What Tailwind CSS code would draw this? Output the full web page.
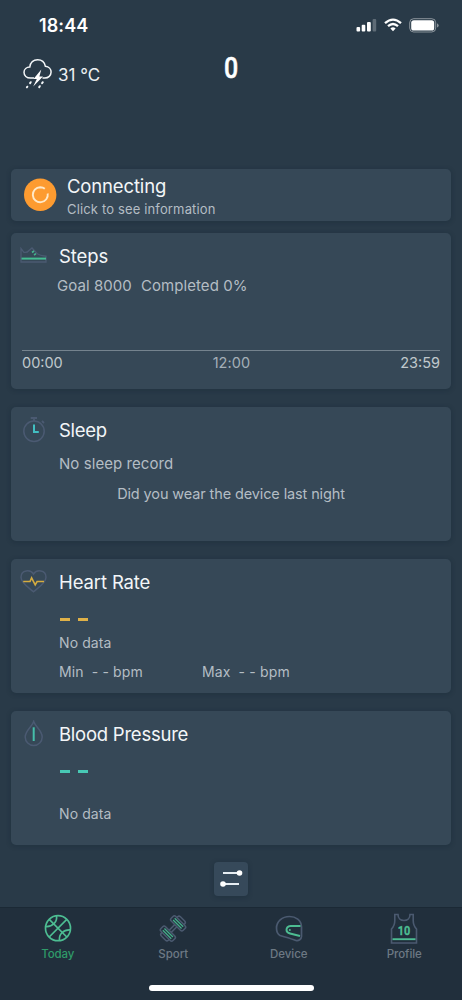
<!DOCTYPE html>
<html lang="en">
<head>
<meta charset="utf-8">
<title>Today</title>
<script src="https://cdn.jsdelivr.net/npm/@tailwindcss/browser@4"></script>
</head>
<body class="bg-white">
<div class="w-[462px] h-[1000px] overflow-hidden bg-[#293a48] font-['Inter','Liberation_Sans',sans-serif] flex flex-col whitespace-nowrap">
  <header class="h-[169px] shrink-0">
    <div class="h-[50px] pl-[39px] pr-[23px] pt-[14px] flex items-start justify-between">
      <div class="text-[18px] leading-[24px] font-semibold text-white tracking-[0.1px]">18:44</div>
      <div class="flex items-center h-[22px] gap-[7px]">
        <svg width="21" height="14" viewBox="0 0 21 14"><g fill="#fff"><rect x="0.5" y="9" width="3.6" height="4.500" rx="1"/><rect x="5.700" y="6.800" width="3.600" height="6.700" rx="1"/><rect x="11" y="4" width="3.800" height="9.500" rx="1"/><rect x="16.600" y="1" width="3.600" height="12.500" rx="1" opacity=".25"/></g></svg>
        <svg width="18" height="14" viewBox="0 0 18 14" fill="none" stroke="#fff" stroke-width="2.3"><path d="M1 5.200Q9-2 17 5.200"/><path d="M4 8.200Q9 3.800 14 8.200"/><path d="M6.400 10.400Q9 8.200 11.600 10.400L9 13.200Z" fill="#fff" stroke="none"/></svg>
        <svg width="30" height="15" viewBox="0 0 30 15"><rect x=".7" y=".7" width="26" height="13.300" rx="4" fill="none" stroke="#fff" stroke-opacity=".45"/><rect x="2.200" y="2.200" width="23" height="10.300" rx="2.600" fill="#fff"/><path d="M28 5.200q1.700.7 1.700 2.200T28 9.600z" fill="#fff" opacity=".45"/></svg>
      </div>
    </div>
    <div class="grid grid-cols-[206px_50px_206px] h-[60px]">
      <div class="flex items-start pl-[23px] pt-[8px]">
        <svg width="30" height="32" viewBox="0 0 30 32" fill="none" stroke="#f4f7f9" stroke-width="1.500"><path d="M11 20H7.600C3.600 20 1 17.500 1 14.300S3.700 9 6.800 9C7.300 4.500 10.500 1.700 14.600 1.700s7 2.600 7.800 6.600c3.500.3 5.700 2.800 5.700 5.800 0 3.500-2.800 5.900-6.200 5.900h-2.400"/><path d="M18.300 11.500L10.500 21h3.300l-3.600 7.500L20 18.600h-3.600z" fill="#fff" stroke="none"/><g stroke-width="2" stroke-linecap="round"><path d="M7.700 24.200l-.6.9M4.300 28.700l-.4.6M19.800 24.200l-.7.9M16.800 28.200l-.6.9"/></g></svg>
        <div class="ml-[5px] mt-[5px] text-[17px] leading-[24px] text-[#eef1f3]">31 °C</div>
      </div>
      <div class="text-center pt-[3px] text-[29px] leading-[30px] font-medium text-white font-['Roboto'] scale-x-[0.86] [-webkit-text-stroke:0.5px_white]">0</div>
    </div>
  </header>

  <main class="h-[738px] shrink-0 px-[11px] flex flex-col">
    <section class="h-[52px] shrink-0 rounded-[5px] bg-[#364857] shadow-[0_1px_4px_1px_rgba(15,30,45,0.22)] flex pl-[13px] pt-[9px]">
      <svg class="block" width="33" height="33" viewBox="0 0 33 33"><circle cx="16.200" cy="16.700" r="16.200" fill="#fd9b30"/><path d="M20.200 10.200A7.600 7.600 0 1 1 13.500 9.500" transform="translate(-.3 .2)" fill="none" stroke="#ffe3b8" stroke-width="0"/><path d="M22.300 11.600A7.500 7.500 0 1 1 16.200 9.200" fill="none" stroke="#ffe3b8" stroke-width="0"/><path d="M16.200 9.200A7.500 7.500 0 1 0 23.700 15.500M16.200 9.200Q19 9.200 20.800 10.800" fill="none" stroke="#ffe9c8" stroke-width="1.900"/></svg>
      <div class="ml-[10px] -mt-[4px]">
        <div class="text-[18.500px] leading-[24px] text-[#f3f6f8] tracking-[-0.15px]">Connecting</div>
        <div class="text-[13px] leading-[20px] text-[#b4bdc4] mt-px tracking-[0.15px]">Click to see information</div>
      </div>
    </section>

    <section class="mt-[12px] h-[156px] shrink-0 rounded-[5px] bg-[#364857] shadow-[0_1px_4px_1px_rgba(15,30,45,0.22)] flex flex-col px-[11px] pt-[11px]">
      <div class="flex h-[24px]">
        <svg class="-ml-[2px] mt-[3px]" width="28" height="17" viewBox="0 0 28 17" fill="none"><path d="M1 15V1.500l3 3.800q3 .7 5-1.800l3-2.500 5 5.500q3 2.200 9 2.700V15z" stroke="#4b5a72" stroke-width="1.300"/><path d="M12 5.500l2-1.500M14 8l2-1.400" stroke="#45b38d" stroke-width="1.600"/><path d="M1.500 11.600H26" stroke="#45bd91" stroke-width="2"/></svg>
        <h2 class="ml-[11px] text-[18.5px] leading-[24px] text-[#f3f6f8] tracking-[-0.1px]">Steps</h2>
      </div>
      <div class="pl-[35px] mt-[8px] flex gap-[9px] text-[15px] leading-[20px] text-[#b4bdc4] tracking-[0.07px]"><span>Goal 8000</span><span>Completed 0%</span></div>
      <div class="mt-[54px] h-px w-[418px] bg-[#75838e]"></div>
      <div class="w-[418px] pt-[2px] flex justify-between text-[14.5px] leading-[20px] text-[#c0c8cd]"><span>00:00</span><span class="text-[#a4afb7] tracking-[0.1px]">12:00</span><span>23:59</span></div>
    </section>

    <section class="mt-[18px] h-[134px] shrink-0 rounded-[5px] bg-[#364857] shadow-[0_1px_4px_1px_rgba(15,30,45,0.22)] px-[11px] pt-[9px]">
      <div class="flex h-[28px]">
        <svg width="24" height="28" viewBox="0 0 24 28" fill="none"><circle cx="12" cy="15.200" r="10.200" stroke="#4b5a72" stroke-width="1.500"/><path d="M8.700 2H15M12 2v3M20 5l2 2" stroke="#4b5a72" stroke-width="1.800"/><path d="M12 8.500V16h4.800" stroke="#42bfc2" stroke-width="2"/></svg>
        <h2 class="ml-[13px] mt-[2px] text-[18.5px] leading-[24px] text-[#f3f6f8] tracking-[-0.3px]">Sleep</h2>
      </div>
      <div class="pl-[37px] mt-[10px] text-[15px] leading-[20px] text-[#b4bdc4] tracking-[0.07px]">No sleep record</div>
      <div class="text-center mt-[10px] text-[14.5px] leading-[20px] text-[#b4bdc4] tracking-[-0.12px]">Did you wear the device last night</div>
    </section>

    <section class="mt-[18px] h-[134px] shrink-0 rounded-[5px] bg-[#364857] shadow-[0_1px_4px_1px_rgba(15,30,45,0.22)] px-[9px] pt-[11px]">
      <div class="flex h-[24px]">
        <svg width="28" height="24" viewBox="0 0 28 24" fill="none"><path d="M13.500 4C10.700-.6 1-.5 1 7.200c0 6 8.500 11 12.500 14.500C17.500 18.200 26 13.200 26 7.200 26-.5 16.300-.6 13.500 4z" stroke="#4b5a72" stroke-width="1.500"/><path d="M3.200 11.500H10l1.600-3.600 3.600 7 1.900-3.400H24" stroke="#d5ac40" stroke-width="1.600"/></svg>
        <h2 class="ml-[11px] text-[18.5px] leading-[24px] text-[#f3f6f8] tracking-[-0.12px]">Heart Rate</h2>
      </div>
      <div class="ml-[40px] mt-[24px] flex gap-[8px]"><i class="block w-[10px] h-[3px] bg-[#dfb148]"></i><i class="block w-[10px] h-[3px] bg-[#dfb148]"></i></div>
      <div class="pl-[39px] mt-[12px] text-[14px] leading-[20px] text-[#b4bdc4] tracking-[0.1px]">No data</div>
      <div class="pl-[39px] mt-[9px] flex text-[14px] leading-[20px] text-[#b4bdc4] tracking-[0.15px]"><div class="w-[143px] flex gap-[8px]"><span>Min</span><span>- - bpm</span></div><div class="flex gap-[8px]"><span>Max</span><span>- - bpm</span></div></div>
    </section>

    <section class="mt-[18px] h-[134px] shrink-0 rounded-[5px] bg-[#364857] shadow-[0_1px_4px_1px_rgba(15,30,45,0.22)] px-[13px] pt-[9px]">
      <div class="flex h-[28px]">
        <svg width="20" height="28" viewBox="0 0 20 28" fill="none"><path d="M9.700 1.500C8.300 6.500 1.200 10.500 1.200 17a8.500 8.500 0 0 0 17 0c0-6.500-7.100-10.500-8.500-15.500z" stroke="#4b5a72" stroke-width="1.500"/><path d="M9.700 7.300V21" stroke="#45bfaa" stroke-width="2"/></svg>
        <h2 class="ml-[15px] mt-[2px] text-[18.5px] leading-[24px] text-[#f3f6f8] tracking-[-0.24px]">Blood Pressure</h2>
      </div>
      <div class="ml-[36px] mt-[22px] flex gap-[8px]"><i class="block w-[10px] h-[3px] bg-[#48c9b5]"></i><i class="block w-[10px] h-[3px] bg-[#48c9b5]"></i></div>
      <div class="pl-[35px] mt-[31px] text-[14px] leading-[20px] text-[#b4bdc4] tracking-[0.1px]">No data</div>
    </section>

    <div class="mt-[17px] self-center w-[34px] h-[34px] shrink-0 rounded-[4px] bg-[#36495a] shadow-[0_1px_4px_1px_rgba(15,30,45,0.22)]">
      <svg width="34" height="34" viewBox="0 0 34 34"><path d="M9 11h16M9 22h16" stroke="#e6edf2" stroke-width="1.900"/><g fill="#fff"><circle cx="25.500" cy="11" r="2.800"/><circle cx="9" cy="22" r="2.800"/></g></svg>
    </div>
  </main>

  <nav class="h-[93px] shrink-0 bg-[#212f3c] border-t border-[#1b2935]">
    <div class="grid grid-cols-4 h-[77px] text-[11.5px] leading-[14px] font-medium text-[#6d7984]">
      <div class="flex flex-col items-center pt-[5px] text-[#2f9b69]">
        <svg width="30" height="32" viewBox="0 0 30 32" fill="none" stroke="#4dbd92" stroke-width="1.700"><circle cx="15" cy="15.200" r="12.500"/><path d="M6.200 6.400L23.800 24M23.800 6.400L6.200 24M13.500 2.800C14.500 9 9.500 14 2.700 13.500M16.500 27.600C15.500 21.400 20.500 16.400 27.300 16.900"/></svg>
        <span class="mt-[2px] tracking-[-0.1px]">Today</span>
      </div>
      <div class="flex flex-col items-center pt-[5px]">
        <svg width="30" height="32" viewBox="0 0 30 32" fill="none"><g transform="translate(15 15.500) rotate(-45)" stroke="#4b5a70" stroke-width="1.500"><path d="M-4-1.500H4M-4 1.500H4"/><rect x="-10.500" y="-8.500" width="6.500" height="17" rx="2"/><rect x="4" y="-8.500" width="6.500" height="17" rx="2"/><path d="M-10.500-5h-1q-2 0-2 2v6q0 2 2 2h1M10.500-5h1q2 0 2 2v6q0 2-2 2h-1"/><path d="M-8.400-6V6M-6.100-6V6M6.100-6V6M8.400-6V6" stroke="#45ab88" stroke-width="1.300"/></g></svg>
        <span class="mt-[2px]">Sport</span>
      </div>
      <div class="flex flex-col items-center pt-[5px]">
        <svg width="30" height="32" viewBox="0 0 30 32" fill="none"><path d="M27.500 14C27.500 7 21.500 3.500 15.500 3.500 8 3.500 2.500 8.500 2.500 15c0 3 1 6 3.500 7.500 5 1.500 11 3 16 5 2.500.8 5.500-1.500 5.500-4z" stroke="#4b5a70" stroke-width="1.700"/><path d="M26.500 13H16.500q-4 .5-4 4 0 2.700 3.500 3.500L26 23" stroke="#4dbd92" stroke-width="1.900"/><circle cx="15.800" cy="17" r="1" fill="#4dbd92"/></svg>
        <span class="mt-[2px]">Device</span>
      </div>
      <div class="flex flex-col items-center pt-[5px]">
        <svg width="30" height="32" viewBox="0 0 30 32" fill="none"><path d="M5.800 1.500H9C9 5 11.500 7.500 15 7.500S21 5 21 1.500h3.200v6q0 5 3.300 8.500v14H2.500V16q3.300-3.500 3.300-8.500z" stroke="#4b5a70" stroke-width="1.600"/><path d="M3.500 26.200H26.500" stroke="#4dbd92" stroke-width="1.900"/><text x="15" y="21.500" text-anchor="middle" font-family="Roboto" font-size="13" font-weight="700" textLength="12.500" lengthAdjust="spacingAndGlyphs" fill="#4dbd92" stroke="#4dbd92" stroke-width=".3">10</text></svg>
        <span class="mt-[2px] tracking-[-0.1px]">Profile</span>
      </div>
    </div>
    <div class="mx-auto w-[165px] h-[6px] rounded-full bg-white"></div>
  </nav>
</div>
</body>
</html>
